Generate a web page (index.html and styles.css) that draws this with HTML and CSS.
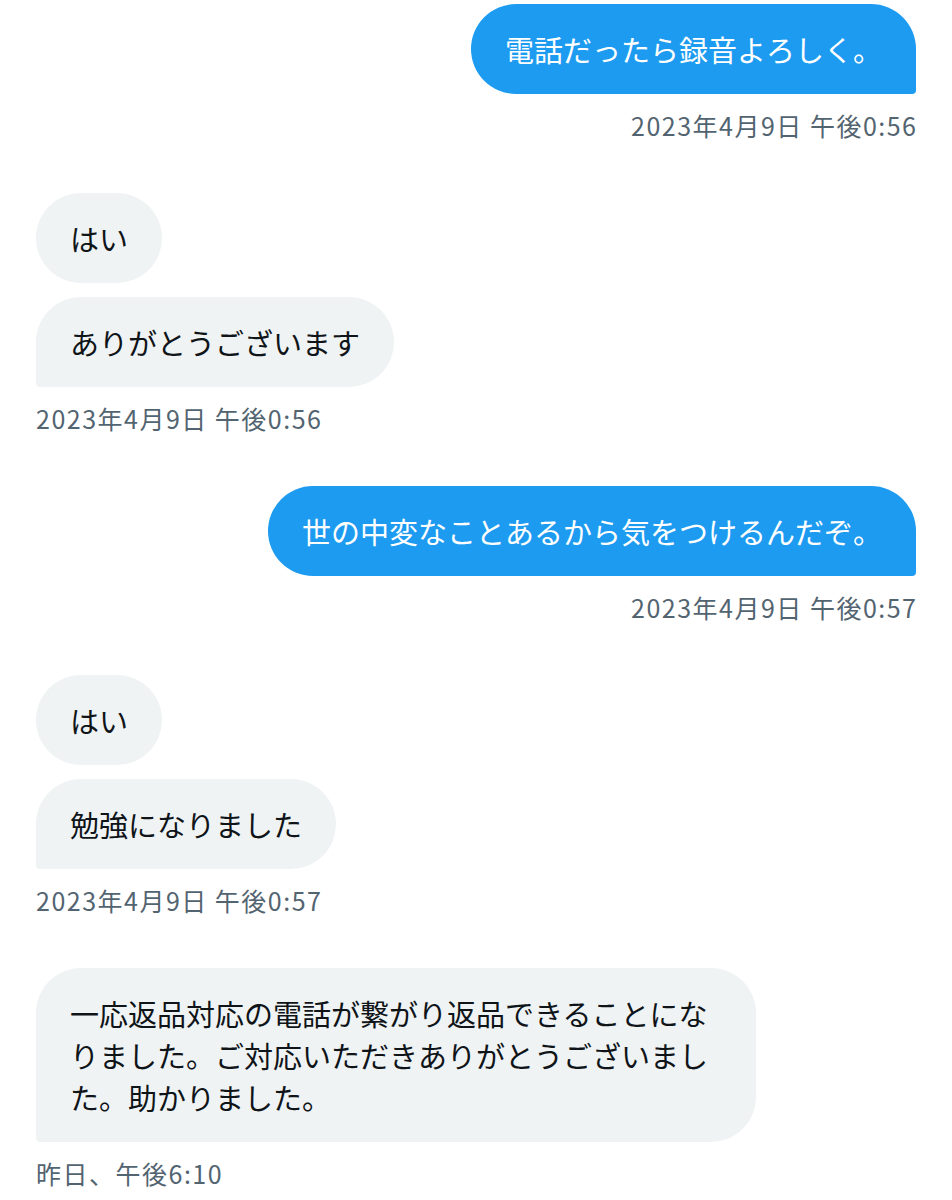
FILE: index.html
```html
<!DOCTYPE html>
<html lang="ja">
<head>
    <meta charset="UTF-8">
    <meta name="viewport" content="width=device-width, initial-scale=1.0">
    <title>メッセージ</title>
    <link rel="stylesheet" href="styles.css">
</head>
<body>
    <div class="conversation">
        <div class="group sent">
            <div class="bubble last">電話だったら録音よろしく。</div>
            <div class="time">2023年4月9日 午後0:56</div>
        </div>

        <div class="group received">
            <div class="bubble">はい</div>
            <div class="bubble last">ありがとうございます</div>
            <div class="time">2023年4月9日 午後0:56</div>
        </div>

        <div class="group sent">
            <div class="bubble last">世の中変なことあるから気をつけるんだぞ。</div>
            <div class="time">2023年4月9日 午後0:57</div>
        </div>

        <div class="group received">
            <div class="bubble">はい</div>
            <div class="bubble last">勉強になりました</div>
            <div class="time">2023年4月9日 午後0:57</div>
        </div>

        <div class="group received">
            <div class="bubble last">一応返品対応の電話が繋がり返品できることになりました。ご対応いただきありがとうございました。助かりました。</div>
            <div class="time">昨日、午後6:10</div>
        </div>
    </div>
</body>
</html>
```

FILE: styles.css
```css
body {
    margin: 0;
    padding: 0;
    background-color: #ffffff;
    font-family: "Noto Sans CJK JP", "Noto Sans", sans-serif;
    color: #0f1419;
}
.conversation {
    padding: 4px 36px 0;
    display: flex;
    flex-direction: column;
    gap: 53px;
}
.group {
    display: flex;
    flex-direction: column;
    gap: 14px;
}
.group.sent {
    align-items: flex-end;
}
.group.received {
    align-items: flex-start;
}
.bubble {
    box-sizing: border-box;
    max-width: 720px;
    padding: 24px 34px;
    border-radius: 45px;
    font-size: 29px;
    line-height: 42px;
}
.sent .bubble {
    background-color: #1d9bf0;
    color: #ffffff;
}
.sent .bubble.last {
    border-bottom-right-radius: 4px;
}
.received .bubble {
    background-color: #eff3f4;
    color: #0f1419;
}
.received .bubble.last {
    border-bottom-left-radius: 4px;
}
.time {
    margin-top: 2px;
    font-size: 25px;
    line-height: 30px;
    letter-spacing: 1.5px;
    color: #536471;
}
.sent .time {
    margin-right: -1.5px;
}
```
